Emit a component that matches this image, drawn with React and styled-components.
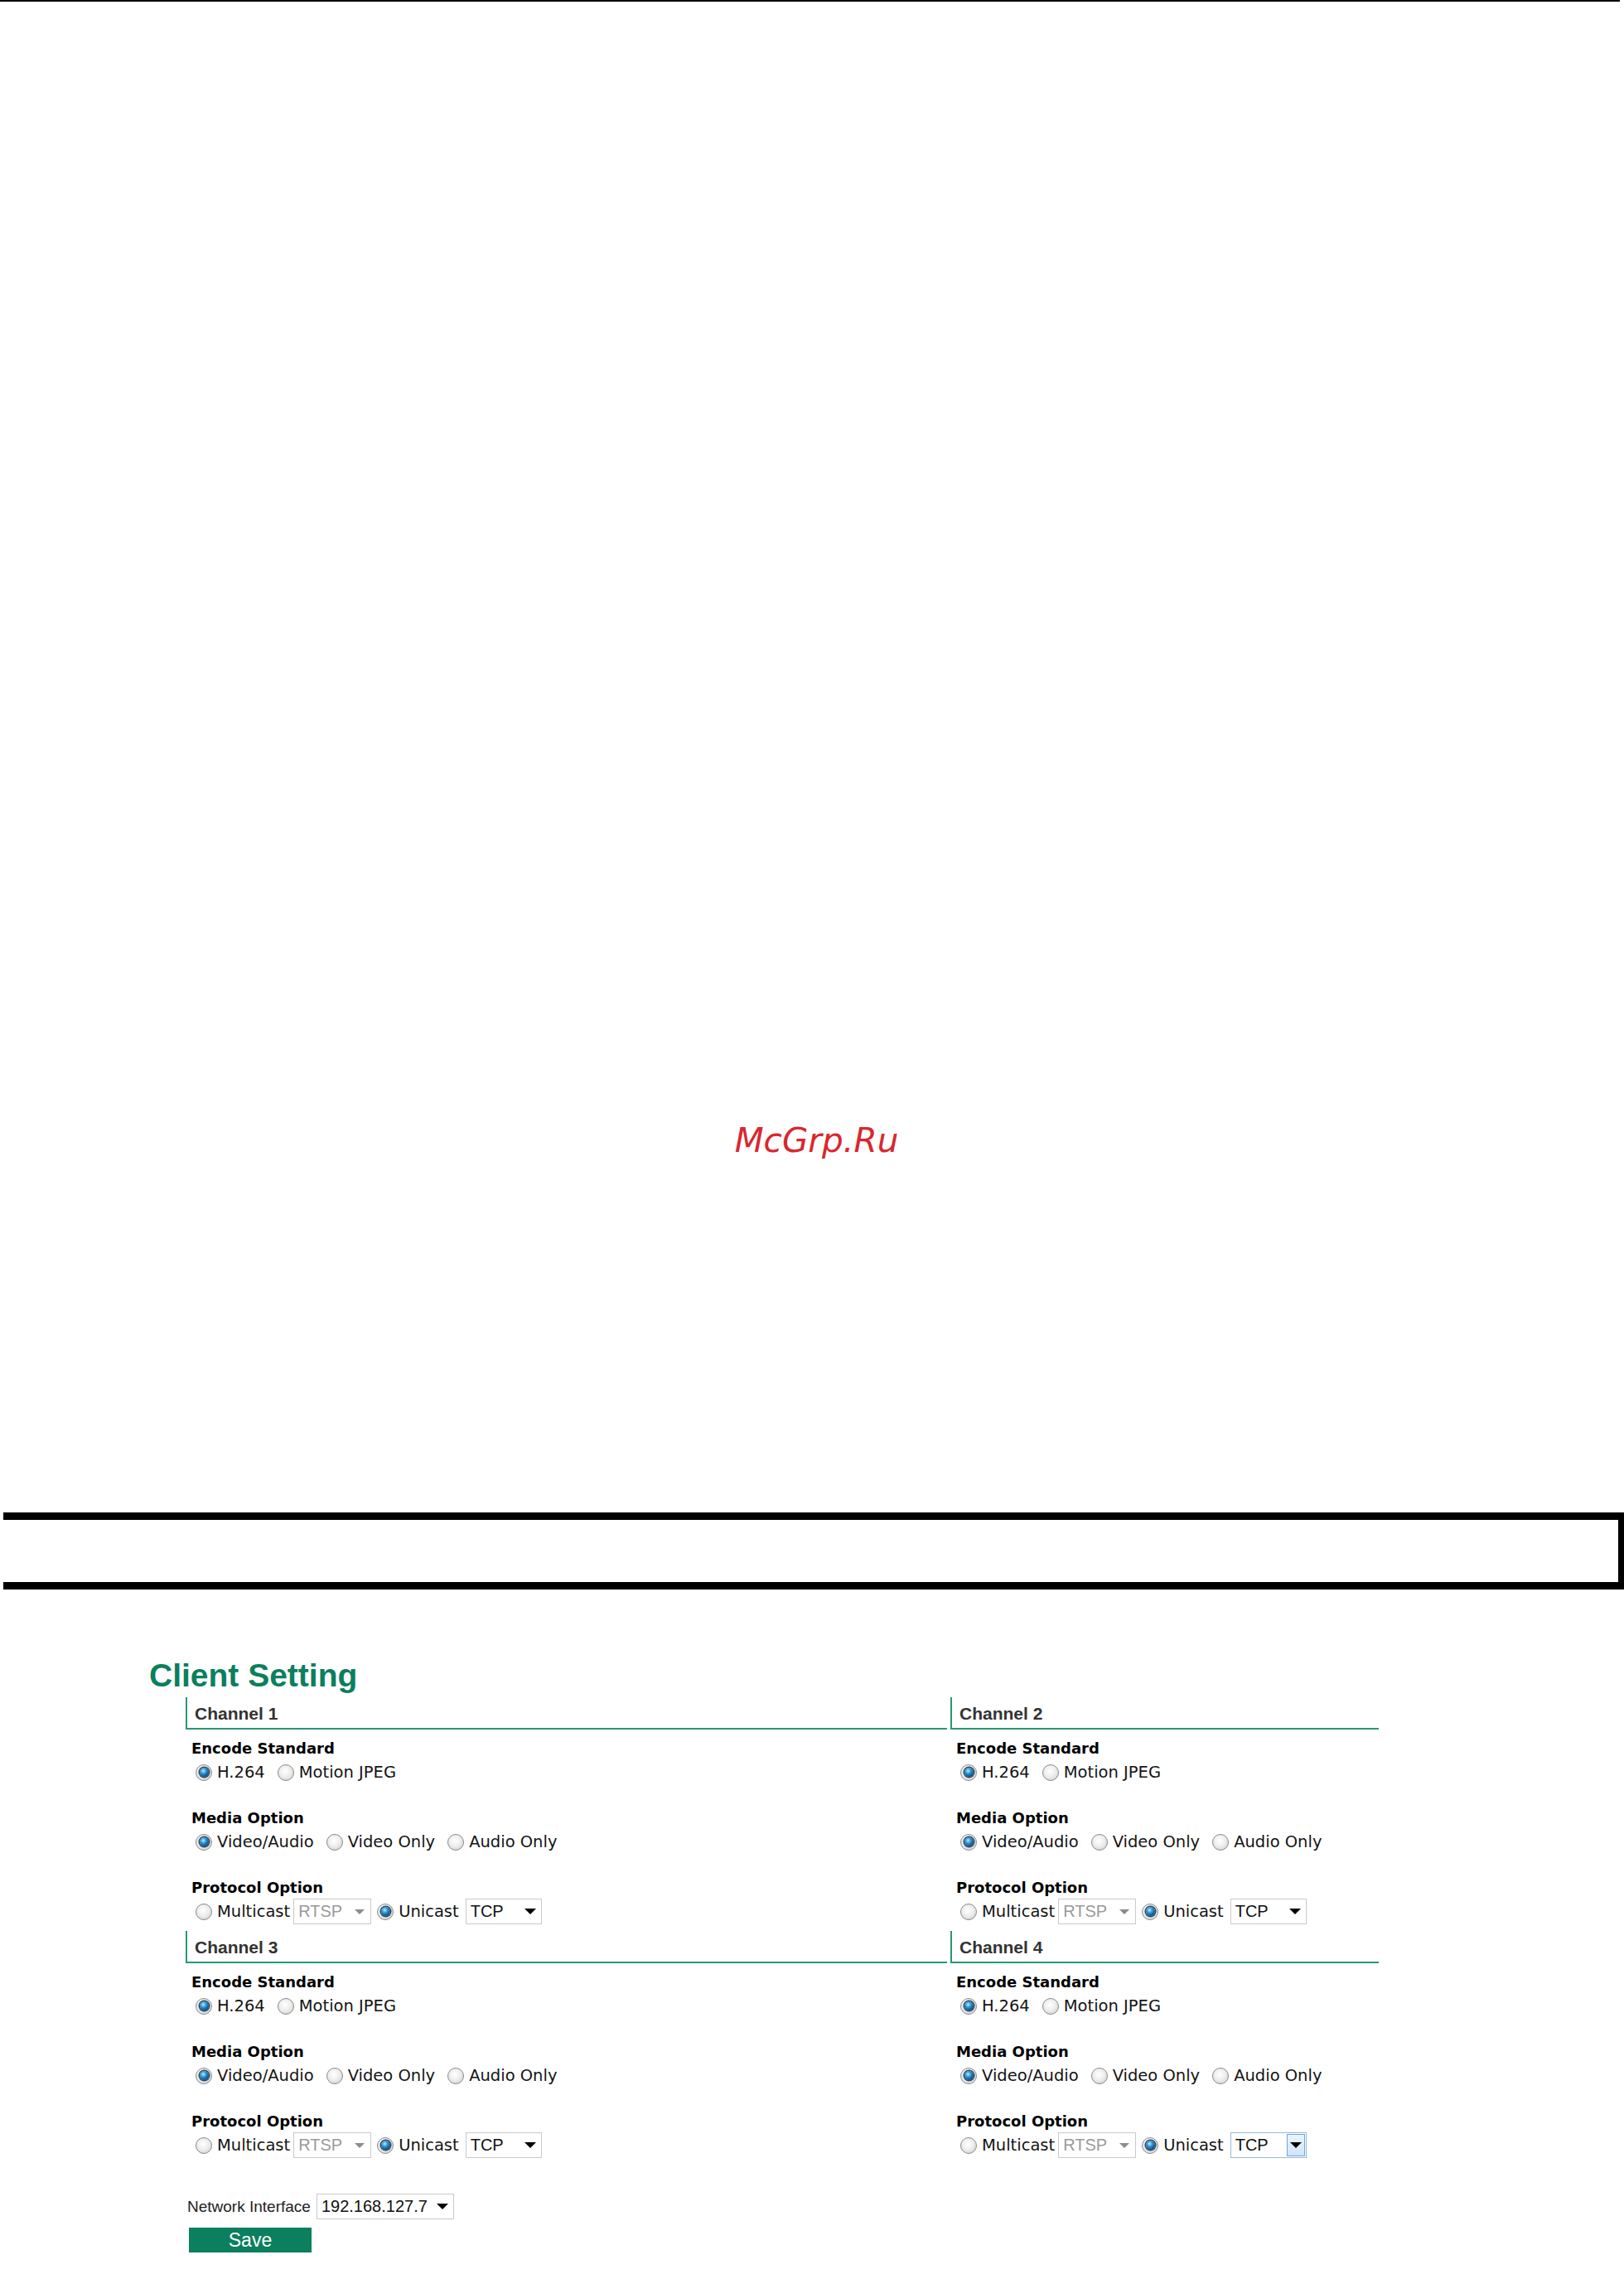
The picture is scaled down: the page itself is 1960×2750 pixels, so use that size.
import React from "react";
import styled, { createGlobalStyle } from "styled-components";

const GREEN = "#0b7f5e";
const LINE_GREEN = "#2a9675";

const channels = [
  { name: "Channel 1" },
  { name: "Channel 2" },
  { name: "Channel 3" },
  { name: "Channel 4", tcpFocused: true },
];

const RadioOption = ({ checked, children, gap }) => (
  <Option $gap={gap}>
    <Radio $checked={checked} />
    <OptionText>{children}</OptionText>
  </Option>
);

const Select = ({ value, width, disabled, focused, gap }) => (
  <SelectBox $w={width} $disabled={disabled} $focused={focused} $gap={gap}>
    <SelectValue>{value}</SelectValue>
    <ArrowArea $focused={focused}>
      <Arrow $disabled={disabled} />
    </ArrowArea>
  </SelectBox>
);

const ChannelCard = ({ channel }) => (
  <Channel>
    <ChannelHeader>{channel.name}</ChannelHeader>
    <ChannelBody>
      <Group>
        <GroupLabel>Encode Standard</GroupLabel>
        <OptionRow>
          <RadioOption checked>H.264</RadioOption>
          <RadioOption>Motion JPEG</RadioOption>
        </OptionRow>
      </Group>
      <Group>
        <GroupLabel>Media Option</GroupLabel>
        <OptionRow>
          <RadioOption checked>Video/Audio</RadioOption>
          <RadioOption>Video Only</RadioOption>
          <RadioOption>Audio Only</RadioOption>
        </OptionRow>
      </Group>
      <Group>
        <GroupLabel>Protocol Option</GroupLabel>
        <OptionRow>
          <RadioOption gap={4}>Multicast</RadioOption>
          <Select value="RTSP" width={94} disabled gap={7} />
          <RadioOption checked gap={8}>
            Unicast
          </RadioOption>
          <Select value="TCP" width={92} focused={channel.tcpFocused} />
        </OptionRow>
      </Group>
    </ChannelBody>
  </Channel>
);

const App = () => {
  return (
    <Page>
      <GlobalStyle />
      <TopRule />
      <Watermark>McGrp.Ru</Watermark>
      <NoteBox />
      <Title>Client Setting</Title>
      <ChannelGrid>
        {channels.map((c) => (
          <ChannelCard key={c.name} channel={c} />
        ))}
      </ChannelGrid>
      <NetworkRow>
        <NetworkLabel>Network Interface</NetworkLabel>
        <Select value="192.168.127.7" width={166} />
      </NetworkRow>
      <SaveButton>Save</SaveButton>
    </Page>
  );
};

const GlobalStyle = createGlobalStyle`
  html, body {
    margin: 0;
    padding: 0;
    background: #ffffff;
  }
  body {
    font-family: "DejaVu Sans", Verdana, sans-serif;
    color: #000;
  }
`;

const Page = styled.div`
  width: 1960px;
  height: 2750px;
  overflow: hidden;
  background: #fff;
`;

const TopRule = styled.div`
  width: 1955px;
  height: 2px;
  background: #000;
`;

const Watermark = styled.div`
  margin-top: 1350px;
  padding-left: 11px;
  text-align: center;
  font-family: "DejaVu Sans", sans-serif;
  font-style: oblique;
  font-size: 40.5px;
  line-height: 48px;
  color: #d9272e;
`;

const NoteBox = styled.div`
  margin-top: 425px;
  margin-left: 4px;
  height: 75px;
  border-top: 9px solid #000;
  border-bottom: 9px solid #000;
  border-right: 7px solid #000;
`;

const Title = styled.h1`
  margin: 83px 0 0 180px;
  font-family: "Liberation Sans", Arial, sans-serif;
  font-weight: bold;
  font-size: 39px;
  line-height: 42px;
  color: ${GREEN};
`;

const ChannelGrid = styled.div`
  margin: 5px 0 0 224px;
  display: grid;
  grid-template-columns: 919px 517px;
  column-gap: 4px;
`;

const Channel = styled.div`
  display: flex;
  flex-direction: column;
`;

const ChannelHeader = styled.div`
  border-left: 2px solid ${LINE_GREEN};
  border-bottom: 2px solid ${LINE_GREEN};
  padding: 2px 0 0 9px;
  line-height: 35px;
  font-family: "Liberation Sans", Arial, sans-serif;
  font-weight: bold;
  font-size: 21px;
  color: #333;
`;

const ChannelBody = styled.div`
  padding: 11px 0 8px 7px;
  display: flex;
  flex-direction: column;
  gap: 28px;
`;

const Group = styled.div`
  display: flex;
  flex-direction: column;
`;

const GroupLabel = styled.div`
  font-family: "DejaVu Sans", Verdana, sans-serif;
  font-weight: bold;
  font-size: 18px;
  line-height: 24px;
  color: #000;
`;

const OptionRow = styled.div`
  margin-top: 1px;
  padding-left: 5px;
  height: 31px;
  display: flex;
  align-items: center;
`;

const Option = styled.label`
  display: inline-flex;
  align-items: center;
  margin-right: ${(p) => (p.$gap !== undefined ? p.$gap : 15)}px;
`;

const Radio = styled.span`
  flex: none;
  width: 20px;
  height: 20px;
  box-sizing: border-box;
  border-radius: 50%;
  border: 1px solid #8a8a8a;
  background: radial-gradient(
    circle at 45% 40%,
    #ffffff 0%,
    #eeeeee 45%,
    #c9c9c9 100%
  );
  margin-right: 6px;
  display: inline-flex;
  align-items: center;
  justify-content: center;

  &::after {
    content: "";
    display: ${(p) => (p.$checked ? "block" : "none")};
    width: 11px;
    height: 11px;
    border-radius: 50%;
    background: radial-gradient(
      circle at 40% 35%,
      #c4ecff 0%,
      #3aa0dc 30%,
      #0f5a92 65%,
      #0a2f52 100%
    );
    box-shadow: 0 0 0 1.5px #2c4a63;
  }
`;

const OptionText = styled.span`
  font-family: "DejaVu Sans", Verdana, sans-serif;
  font-size: 19.5px;
  color: #141414;
  white-space: nowrap;
`;

const SelectBox = styled.div`
  flex: none;
  width: ${(p) => p.$w}px;
  height: 31px;
  box-sizing: border-box;
  border: 1px solid ${(p) => (p.$focused ? "#9ab8d8" : "#cacaca")};
  background: #fff;
  margin-right: ${(p) => (p.$gap !== undefined ? p.$gap : 0)}px;
  display: flex;
  align-items: stretch;
  font-family: "Liberation Sans", Arial, sans-serif;
  font-size: 20px;
  color: ${(p) => (p.$disabled ? "#9a9a9a" : "#111")};
`;

const SelectValue = styled.span`
  flex: 1;
  padding-left: 5px;
  display: flex;
  align-items: center;
  white-space: nowrap;
`;

const ArrowArea = styled.span`
  flex: none;
  width: ${(p) => (p.$focused ? 22 : 26)}px;
  margin: ${(p) => (p.$focused ? "1px" : "0")};
  display: flex;
  align-items: center;
  justify-content: center;
  box-sizing: border-box;
  background: ${(p) =>
    p.$focused ? "linear-gradient(#eaf4fd, #cfe5fa)" : "transparent"};
  border: ${(p) => (p.$focused ? "1px solid #6fa7dc" : "none")};
`;

const Arrow = styled.span`
  width: 0;
  height: 0;
  border-left: ${(p) => (p.$disabled ? 6 : 7)}px solid transparent;
  border-right: ${(p) => (p.$disabled ? 6 : 7)}px solid transparent;
  border-top: ${(p) => (p.$disabled ? 6 : 7)}px solid
    ${(p) => (p.$disabled ? "#8c8c8c" : "#000")};
`;

const NetworkRow = styled.div`
  margin: 35px 0 0 226px;
  display: flex;
  align-items: baseline;
  gap: 7px;
`;

const NetworkLabel = styled.span`
  font-family: "Liberation Sans", Arial, sans-serif;
  font-size: 19px;
  color: #222;
`;

const SaveButton = styled.button`
  display: block;
  margin: 10px 0 0 228px;
  width: 148px;
  height: 30px;
  padding: 0;
  border: none;
  background: ${GREEN};
  color: #fff;
  font-family: "Liberation Sans", Arial, sans-serif;
  font-size: 23px;
  line-height: 30px;
`;

export default App;
